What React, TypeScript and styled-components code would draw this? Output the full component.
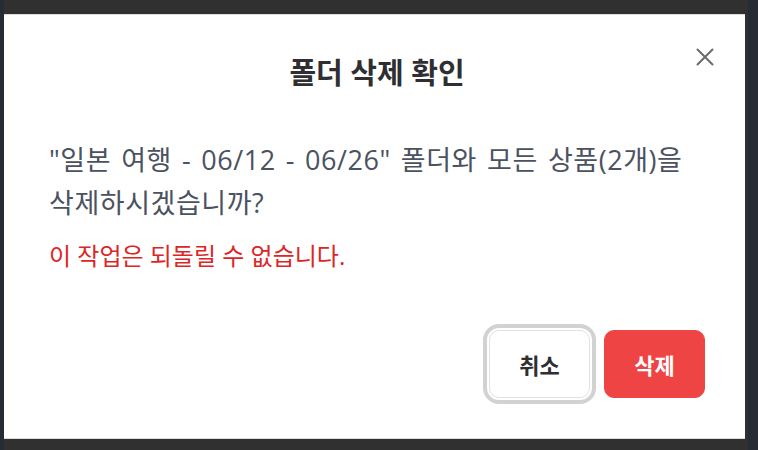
import React from "react";
import styled, { createGlobalStyle } from "styled-components";

const FONT = `"Open Sans", "Noto Sans CJK KR", sans-serif`;

const Global = createGlobalStyle`
  html, body { margin: 0; padding: 0; }
  body {
    background: #272b33;
    font-family: ${FONT};
    width: 758px;
    height: 450px;
    overflow: hidden;
  }
`;

const Backdrop = styled.div`
  margin: 0 10px 0 4px;
  height: 450px;
  background: #303030;
  padding: 14px 3px 0 0;
  box-sizing: border-box;
`;

const Dialog = styled.div`
  position: relative;
  background: #ffffff;
  border-top: 1px solid #dcdcdc;
  border-bottom: 1px solid #dcdcdc;
  height: 425px;
  box-sizing: border-box;
  padding: 38px 40px 40px 45px;
  display: flex;
  flex-direction: column;
`;

const Title = styled.h2`
  margin: 0;
  text-align: center;
  font-size: 29px;
  line-height: 40px;
  font-weight: 700;
  color: #2f2f33;
`;

const CloseButton = styled.button`
  position: absolute;
  top: 26px;
  right: 24px;
  width: 32px;
  height: 32px;
  border: none;
  background: transparent;
  padding: 0;
  display: flex;
  align-items: center;
  justify-content: center;
  cursor: pointer;
`;

const Message = styled.p`
  margin: 45px 0 0 0;
  font-size: 27px;
  letter-spacing: 0.55px;
  word-spacing: 2.5px;
  line-height: 43px;
  color: #4b5260;
  word-break: keep-all;
`;

const Warning = styled.p`
  margin: 16px 0 0 0;
  font-size: 24px;
  line-height: 32px;
  color: #dc2626;
  word-break: keep-all;
`;

const Actions = styled.div`
  margin-top: auto;
  display: flex;
  justify-content: flex-end;
  gap: 14px;
`;

const Button = styled.button<{ $variant: "cancel" | "danger" }>`
  height: 68px;
  min-width: 101px;
  padding: 0 28px;
  border-radius: 10px;
  font-family: ${FONT};
  font-size: 22px;
  font-weight: 700;
  cursor: pointer;
  box-sizing: border-box;
  border: 1px solid ${(p) => (p.$variant === "cancel" ? "#e2e2e2" : "#ef4444")};
  background: ${(p) => (p.$variant === "cancel" ? "#ffffff" : "#ef4444")};
  color: ${(p) => (p.$variant === "cancel" ? "#2f2f33" : "#ffffff")};
  ${(p) =>
    p.$variant === "cancel"
      ? `outline: 4px solid #d2d2d2; outline-offset: 2px;`
      : ``}
`;

export default function App() {
  return (
    <>
      <Global />
      <Backdrop>
        <Dialog>
          <Title>폴더 삭제 확인</Title>
          <CloseButton aria-label="닫기">
            <svg width="18" height="18" viewBox="0 0 18 18">
              <path d="M1.5 1.5 L16.5 16.5 M16.5 1.5 L1.5 16.5" stroke="#6b6b6e" strokeWidth="2" strokeLinecap="round" />
            </svg>
          </CloseButton>
          <Message>
            "일본 여행 - 06/12 - 06/26" 폴더와 모든 상품(2개)을 삭제하시겠습니까?
          </Message>
          <Warning>이 작업은 되돌릴 수 없습니다.</Warning>
          <Actions>
            <Button $variant="cancel">취소</Button>
            <Button $variant="danger">삭제</Button>
          </Actions>
        </Dialog>
      </Backdrop>
    </>
  );
}
